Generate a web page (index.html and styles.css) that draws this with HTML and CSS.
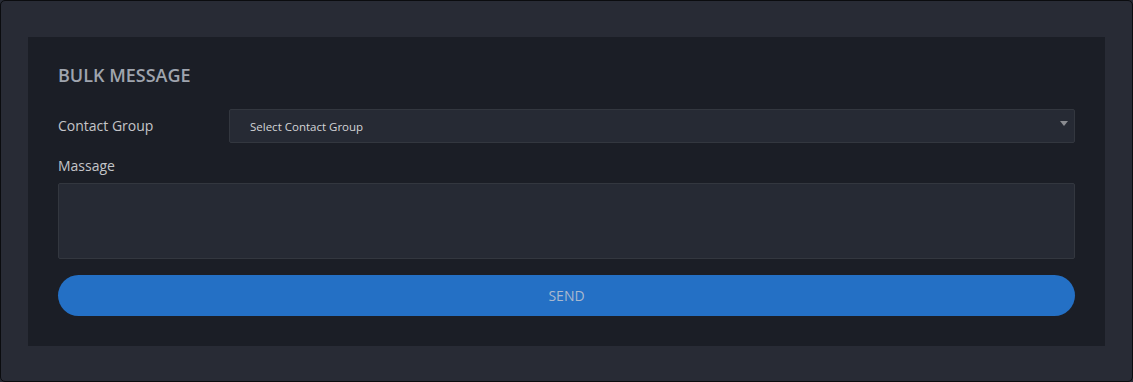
FILE: index.html
```html
<!DOCTYPE html>
<html lang="en">
<head>
    <meta charset="UTF-8">
    <meta name="viewport" content="width=device-width, initial-scale=1.0">
    <title>Bulk Message</title>
    <link rel="stylesheet" href="styles.css">
</head>
<body>
    <div class="page">
        <div class="panel">
            <h2 class="title">BULK MESSAGE</h2>
            <form action="">
                <div class="row">
                    <label class="label" for="group">Contact Group</label>
                    <div class="select">
                        <select id="group">
                            <option>Select Contact Group</option>
                        </select>
                        <span class="caret"></span>
                    </div>
                </div>
                <div class="field">
                    <label class="label" for="message">Massage</label>
                    <textarea id="message"></textarea>
                </div>
                <button type="button" class="send">SEND</button>
            </form>
        </div>
    </div>
</body>
</html>
```

FILE: styles.css
```css
* {
    box-sizing: border-box;
    margin: 0;
    padding: 0;
}
body {
    font-family: "Open Sans", "Noto Sans", sans-serif;
    background-color: #282b35;
}
.page {
    width: 1133px;
    height: 382px;
    background-color: #282b35;
    border: 1px solid #0b0c0f;
    border-radius: 5px;
    padding: 36px 27px;
}
.panel {
    background-color: #1b1e26;
    height: 309px;
    padding: 26px 30px 0 30px;
}
.title {
    font-size: 18px;
    font-weight: 600;
    color: #9fa4ae;
    line-height: 24px;
    margin-bottom: 22px;
}
.row {
    display: flex;
    align-items: center;
}
.label {
    font-size: 14px;
    color: #c4c5c9;
    line-height: 20px;
}
.row .label {
    width: 171px;
    flex-shrink: 0;
}
.select {
    position: relative;
    flex: 1;
}
.select select {
    width: 100%;
    height: 34px;
    appearance: none;
    background-color: #262a34;
    border: 1px solid #33373f;
    border-radius: 2px;
    color: #d3d4d7;
    font-family: "Open Sans", "Noto Sans", sans-serif;
    font-size: 11.5px;
    padding-left: 20px;
}
.caret {
    position: absolute;
    right: 7px;
    top: 12px;
    border-left: 4px solid transparent;
    border-right: 4px solid transparent;
    border-top: 5px solid #8a8c91;
}
.field {
    margin-top: 13px;
}
.field .label {
    display: block;
    margin-bottom: 7px;
}
textarea {
    display: block;
    width: 100%;
    height: 76px;
    background-color: #262a34;
    border: 1px solid #33373f;
    border-radius: 2px;
    resize: none;
}
.send {
    display: block;
    width: 100%;
    height: 41px;
    margin-top: 16px;
    background-color: #2470c5;
    border: none;
    border-radius: 21px;
    color: #a9b9cf;
    font-family: "Open Sans", "Noto Sans", sans-serif;
    font-size: 14px;
}
```
